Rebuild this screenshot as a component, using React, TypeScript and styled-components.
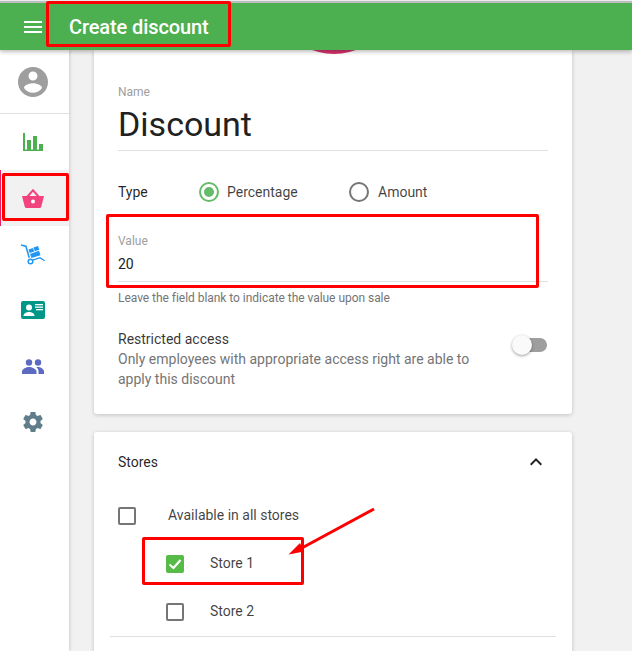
import React from "react";
import styled, { createGlobalStyle } from "styled-components";

const GlobalStyle = createGlobalStyle`
  html, body {
    margin: 0;
    padding: 0;
    background: #f1f1f1;
    font-family: Roboto, "Liberation Sans", sans-serif;
  }
`;

function ChartIcon() {
  return (
    <svg width="20" height="18" viewBox="0 0 20 18" fill="#4caf50">
      <rect x="0" y="0" width="2" height="18" />
      <rect x="0" y="16.500" width="20" height="1.500" />
      <rect x="4" y="7" width="4" height="11" />
      <rect x="10" y="3" width="4" height="15" />
      <rect x="16" y="11" width="4" height="7" />
    </svg>
  );
}

function BasketIcon() {
  return (
    <svg width="22" height="19" viewBox="0 0 22 19">
      <path d="M0 7h22l-2.700 10.500c-.2.900-.8 1.500-1.700 1.500H4.400c-.9 0-1.500-.6-1.700-1.500z" fill="#f2437f" />
      <path d="M5.500 7.500 11 1.300l5.500 6.200" fill="none" stroke="#f2437f" strokeWidth="2" />
      <circle cx="11" cy="12.500" r="2" fill="#fff" />
    </svg>
  );
}

function TruckIcon() {
  return (
    <svg width="24" height="21" viewBox="0 0 24 21" fill="#2196f3">
      <path d="M0 .2 5.500 1.500 9 13.500l-1.500.6L4.300 3 0 1.800z" />
      <circle cx="9.500" cy="17.500" r="2.300" fill="none" stroke="#2196f3" strokeWidth="1.500" />
      <path d="M11.500 15.500 19 13l5 3.200-.6 1-4.600-2.600-7 2.200z" />
      <path d="M7.500 5.500 12 4l1.200 3.400-4.500 1.500z" />
      <path d="M9 10 18 6.800l1.500 4.500L10.500 14z" />
      <path d="M12.500 3.500 17 2l1.300 3.800-4.500 1.500z" />
    </svg>
  );
}

function BadgeIcon() {
  return (
    <svg width="24" height="18" viewBox="0 0 24 18">
      <rect x="0" y="0" width="24" height="18" rx="2" fill="#009688" />
      <circle cx="8" cy="6.500" r="3" fill="#fff" />
      <path d="M2.500 15c0-2.800 3-4 5.500-4s5.500 1.200 5.500 4z" fill="#fff" />
      <rect x="14" y="3" width="8" height="1.300" fill="#fff" />
      <rect x="14" y="5.500" width="8" height="1.300" fill="#fff" />
      <rect x="15" y="8" width="7" height="1.300" fill="#fff" />
    </svg>
  );
}

function PeopleIcon() {
  return (
    <svg width="22" height="15" viewBox="0 0 22 15" fill="#5c6bc0">
      <circle cx="7" cy="3.500" r="3.200" />
      <circle cx="16" cy="3.500" r="3.200" />
      <path d="M0 15v-2.500C0 9.800 4.500 8 7 8s7.500 1.800 7.500 4.500V15z" />
      <path d="M16 8c-.6 0-1.200.1-1.800.2 1.500 1 2.300 2.500 2.300 4.300V15H22v-2.500C22 9.800 18.500 8 16 8z" />
    </svg>
  );
}

function GearIcon() {
  return (
    <svg width="24" height="24" viewBox="0 0 24 24" fill="#607d8b">
      <path d="M19.430 12.980c.04-.32.07-.64.07-.98s-.03-.66-.07-.98l2.110-1.650c.19-.15.240-.42.120-.64l-2-3.460c-.12-.22-.39-.3-.61-.22l-2.490 1c-.52-.4-1.080-.73-1.690-.98l-.38-2.650C14.460 2.180 14.250 2 14 2h-4c-.25 0-.46.180-.49.420l-.38 2.650c-.61.25-1.170.59-1.690.98l-2.490-1c-.23-.09-.49 0-.61.220l-2 3.460c-.13.220-.07.490.12.640l2.110 1.650c-.04.320-.07.650-.07.980s.03.660.07.980l-2.110 1.650c-.19.150-.24.420-.12.640l2 3.460c.12.220.39.300.61.220l2.490-1c.52.400 1.080.730 1.690.980l.38 2.650c.03.240.24.420.49.420h4c.25 0 .46-.18.49-.42l.38-2.650c.61-.25 1.170-.59 1.690-.98l2.490 1c.23.09.49 0 .61-.22l2-3.460c.12-.22.07-.49-.12-.64l-2.110-1.650zM12 15.500c-1.930 0-3.500-1.570-3.500-3.500s1.570-3.500 3.500-3.500 3.500 1.570 3.500 3.500-1.570 3.500-3.500 3.500z" />
    </svg>
  );
}

function ProfileIcon() {
  return (
    <svg width="36" height="36" viewBox="0 0 24 24" fill="#9e9e9e">
      <path d="M12 2C6.480 2 2 6.480 2 12s4.480 10 10 10 10-4.480 10-10S17.520 2 12 2zm0 3c1.660 0 3 1.340 3 3s-1.340 3-3 3-3-1.340-3-3 1.340-3 3-3zm0 14.200c-2.500 0-4.710-1.280-6-3.220.030-1.990 4-3.080 6-3.080 1.990 0 5.970 1.090 6 3.080-1.290 1.940-3.500 3.220-6 3.220z" />
    </svg>
  );
}

const navItems = [
  { key: "chart", icon: <ChartIcon />, active: false },
  { key: "basket", icon: <BasketIcon />, active: true },
  { key: "truck", icon: <TruckIcon />, active: false },
  { key: "badge", icon: <BadgeIcon />, active: false },
  { key: "people", icon: <PeopleIcon />, active: false },
  { key: "gear", icon: <GearIcon />, active: false }
];

export default function App() {
  return (
    <Page>
      <GlobalStyle />
      <Toolbar>
        <Burger>
          <span />
          <span />
          <span />
        </Burger>
        <Title>Create discount</Title>
      </Toolbar>
      <Body>
        <Sidebar>
          <ProfileSlot>
            <ProfileIcon />
          </ProfileSlot>
          {navItems.map(({ key, icon, active }) => (
            <NavItem key={key} active={active}>
              {icon}
            </NavItem>
          ))}
        </Sidebar>
        <Main>
          <Card>
            <Avatar />
            <FieldLabel>Name</FieldLabel>
            <NameValue>Discount</NameValue>
            <TypeRow>
              <TypeLabel>Type</TypeLabel>
              <RadioOption gap={8}>
                <Radio checked />
                Percentage
              </RadioOption>
              <RadioOption gap={9}>
                <Radio />
                Amount
              </RadioOption>
            </TypeRow>
            <ValueField>
              <FieldLabel>Value</FieldLabel>
              <ValueText>20</ValueText>
            </ValueField>
            <Hint>Leave the field blank to indicate the value upon sale</Hint>
            <RestrictedRow>
              <RestrictedText>
                <RestrictedTitle>Restricted access</RestrictedTitle>
                <RestrictedNote>
                  Only employees with appropriate access right are able to apply this discount
                </RestrictedNote>
              </RestrictedText>
              <Switch>
                <SwitchKnob />
              </Switch>
            </RestrictedRow>
          </Card>
          <StoresCard>
            <StoresHeader>
              Stores
              <svg width="24" height="24" viewBox="0 0 24 24" fill="#212121">
                <path d="M7.410 15.410 12 10.830l4.590 4.580L18 14l-6-6-6 6z" />
              </svg>
            </StoresHeader>
            <StoreRow>
              <Checkbox />
              <StoreName>Available in all stores</StoreName>
            </StoreRow>
            <StoreRow nested>
              <Checkbox checked>
                <svg width="18" height="18" viewBox="0 0 18 18" fill="none" stroke="#fff" strokeWidth="2">
                  <path d="M3.500 9.500 7.500 13 14.500 5" />
                </svg>
              </Checkbox>
              <StoreName nested>Store 1</StoreName>
            </StoreRow>
            <StoreRow nested>
              <Checkbox />
              <StoreName nested>Store 2</StoreName>
            </StoreRow>
            <StoresDivider />
          </StoresCard>
        </Main>
      </Body>
      <Highlight x={46} y={1} w={185} h={46} />
      <Highlight x={2} y={173} w={67} h={48} />
      <Highlight x={106} y={214} w={433} h={74} />
      <Highlight x={142} y={537} w={162} h={48} />
      <Arrow width="100" height="60" viewBox="0 0 100 60">
        <path d="M95 2 21 42" stroke="#ff0000" strokeWidth="3" fill="none" />
        <path d="M9.500 47.500 21 36 25 44.500z" fill="#ff0000" />
      </Arrow>
    </Page>
  );
}

const Page = styled.div`
  position: relative;
  width: 632px;
  height: 651px;
  overflow: hidden;
  background: #f1f1f1;
  box-sizing: border-box;
  padding-top: 1px;
  display: flex;
  flex-direction: column;
`;

const Toolbar = styled.header`
  position: relative;
  z-index: 3;
  flex: none;
  height: 49px;
  box-sizing: border-box;
  border-top: 2px solid #bdbdbd;
  background: #4caf50;
  box-shadow: 0 2px 4px rgba(0, 0, 0, 0.25);
  display: flex;
  align-items: center;
  padding-left: 24px;
  gap: 27px;
  color: #fff;
`;

const Burger = styled.div`
  width: 18px;
  display: flex;
  flex-direction: column;
  gap: 3px;

  span {
    display: block;
    height: 2px;
    background: #fff;
  }
`;

const Title = styled.div`
  font-size: 20px;
  font-weight: 500;
  line-height: 24px;
  letter-spacing: -0.1px;
`;

const Body = styled.div`
  flex: 1;
  min-height: 0;
  display: flex;
`;

const Sidebar = styled.nav`
  position: relative;
  z-index: 2;
  flex: none;
  width: 69px;
  background: #fff;
  box-shadow: 1px 0 3px rgba(0, 0, 0, 0.15);
`;

const ProfileSlot = styled.div`
  height: 63px;
  box-sizing: content-box;
  padding-right: 3px;
  border-bottom: 1px solid #e0e0e0;
  display: flex;
  align-items: center;
  justify-content: center;
`;

const NavItem = styled.div<{ active: boolean }>`
  height: 56px;
  padding-right: 4px;
  display: flex;
  align-items: center;
  justify-content: center;
  box-sizing: border-box;
  background: ${props => (props.active ? "#f1f1f1" : "transparent")};
  border-left: 1px solid ${props => (props.active ? "#e91e63" : "transparent")};
`;

const Main = styled.main`
  flex: 1;
  min-width: 0;
  padding: 0 60px 0 25px;
`;

const Card = styled.section`
  position: relative;
  background: #fff;
  border-radius: 0 0 3px 3px;
  box-shadow: 0 1px 4px rgba(0, 0, 0, 0.2);
  padding: 35px 24px 0;
  height: 364px;
  box-sizing: border-box;
`;

const Avatar = styled.div`
  position: absolute;
  left: 200px;
  top: -46px;
  width: 80px;
  height: 50px;
  border-radius: 50%;
  background: #d6336c;
`;

const FieldLabel = styled.div`
  font-size: 12px;
  line-height: 14px;
  color: #9e9e9e;
`;

const NameValue = styled.div`
  font-size: 34px;
  line-height: 40px;
  color: #212121;
  margin-top: 5px;
  padding-bottom: 6px;
  border-bottom: 1px solid #e0e0e0;
`;

const TypeRow = styled.div`
  display: flex;
  align-items: center;
  margin-top: 30px;
  height: 22px;
  font-size: 14px;
  color: rgba(0, 0, 0, 0.87);
`;

const TypeLabel = styled.div`
  width: 81px;
`;

const RadioOption = styled.div<{ gap: number }>`
  display: flex;
  align-items: center;
  gap: ${props => props.gap}px;
  width: 150px;
  color: rgba(0, 0, 0, 0.75);
`;

const Radio = styled.span<{ checked?: boolean }>`
  width: 20px;
  height: 20px;
  box-sizing: border-box;
  border-radius: 50%;
  border: 2px solid ${props => (props.checked ? "#66bb6a" : "#757575")};
  display: flex;
  align-items: center;
  justify-content: center;

  &::after {
    content: "";
    display: ${props => (props.checked ? "block" : "none")};
    width: 10px;
    height: 10px;
    border-radius: 50%;
    background: #66bb6a;
  }
`;

const ValueField = styled.div`
  margin-top: 31px;
  padding-bottom: 7px;
  border-bottom: 1px solid #e0e0e0;
`;

const ValueText = styled.div`
  font-size: 14px;
  line-height: 20px;
  color: #212121;
  margin-top: 6px;
`;

const Hint = styled.div`
  font-size: 12px;
  line-height: 14px;
  letter-spacing: -0.04px;
  color: #757575;
  margin-top: 9px;
`;

const RestrictedRow = styled.div`
  display: flex;
  justify-content: space-between;
  align-items: flex-start;
  margin-top: 24px;
`;

const RestrictedText = styled.div`
  width: 370px;
  font-size: 14px;
  line-height: 20px;
`;

const RestrictedTitle = styled.div`
  color: rgba(0, 0, 0, 0.8);
`;

const RestrictedNote = styled.div`
  color: #757575;
`;

const Switch = styled.div`
  position: relative;
  width: 34px;
  height: 14px;
  border-radius: 7px;
  background: #9e9e9e;
  margin-top: 9px;
  margin-right: 1px;
`;

const SwitchKnob = styled.span`
  position: absolute;
  left: -1px;
  top: -3px;
  width: 20px;
  height: 20px;
  border-radius: 50%;
  background: #fafafa;
  box-shadow: 0 1px 3px rgba(0, 0, 0, 0.4);
`;

const StoresCard = styled.section`
  background: #fff;
  border-radius: 3px;
  box-shadow: 0 1px 4px rgba(0, 0, 0, 0.2);
  margin-top: 18px;
  padding: 0 16px;
  height: 300px;
  box-sizing: border-box;
`;

const StoresHeader = styled.div`
  height: 60px;
  padding: 0 8px 0 8px;
  display: flex;
  align-items: center;
  justify-content: space-between;
  font-size: 14px;
  color: rgba(0, 0, 0, 0.87);
`;

const StoreRow = styled.div<{ nested?: boolean }>`
  height: 48px;
  display: flex;
  align-items: center;
  padding-left: ${props => (props.nested ? "56px" : "8px")};
`;

const Checkbox = styled.span<{ checked?: boolean }>`
  flex: none;
  width: 18px;
  height: 18px;
  box-sizing: border-box;
  border-radius: 2px;
  border: ${props => (props.checked ? "none" : "2px solid #757575")};
  background: ${props => (props.checked ? "#56bb47" : "transparent")};
  display: flex;
`;

const StoreName = styled.span<{ nested?: boolean }>`
  margin-left: ${props => (props.nested ? "26px" : "32px")};
  padding-bottom: 2px;
  font-size: 14px;
  color: rgba(0, 0, 0, 0.75);
`;

const StoresDivider = styled.div`
  height: 1px;
  background: #e0e0e0;
`;

// red annotation frames drawn over the screenshot
const Highlight = styled.div<{ x: number; y: number; w: number; h: number }>`
  position: absolute;
  z-index: 5;
  left: ${props => props.x}px;
  top: ${props => props.y}px;
  width: ${props => props.w}px;
  height: ${props => props.h}px;
  box-sizing: border-box;
  border: 3px solid #ff0000;
  border-radius: 2px;
`;

const Arrow = styled.svg`
  position: absolute;
  z-index: 6;
  left: 279px;
  top: 507px;
`;
